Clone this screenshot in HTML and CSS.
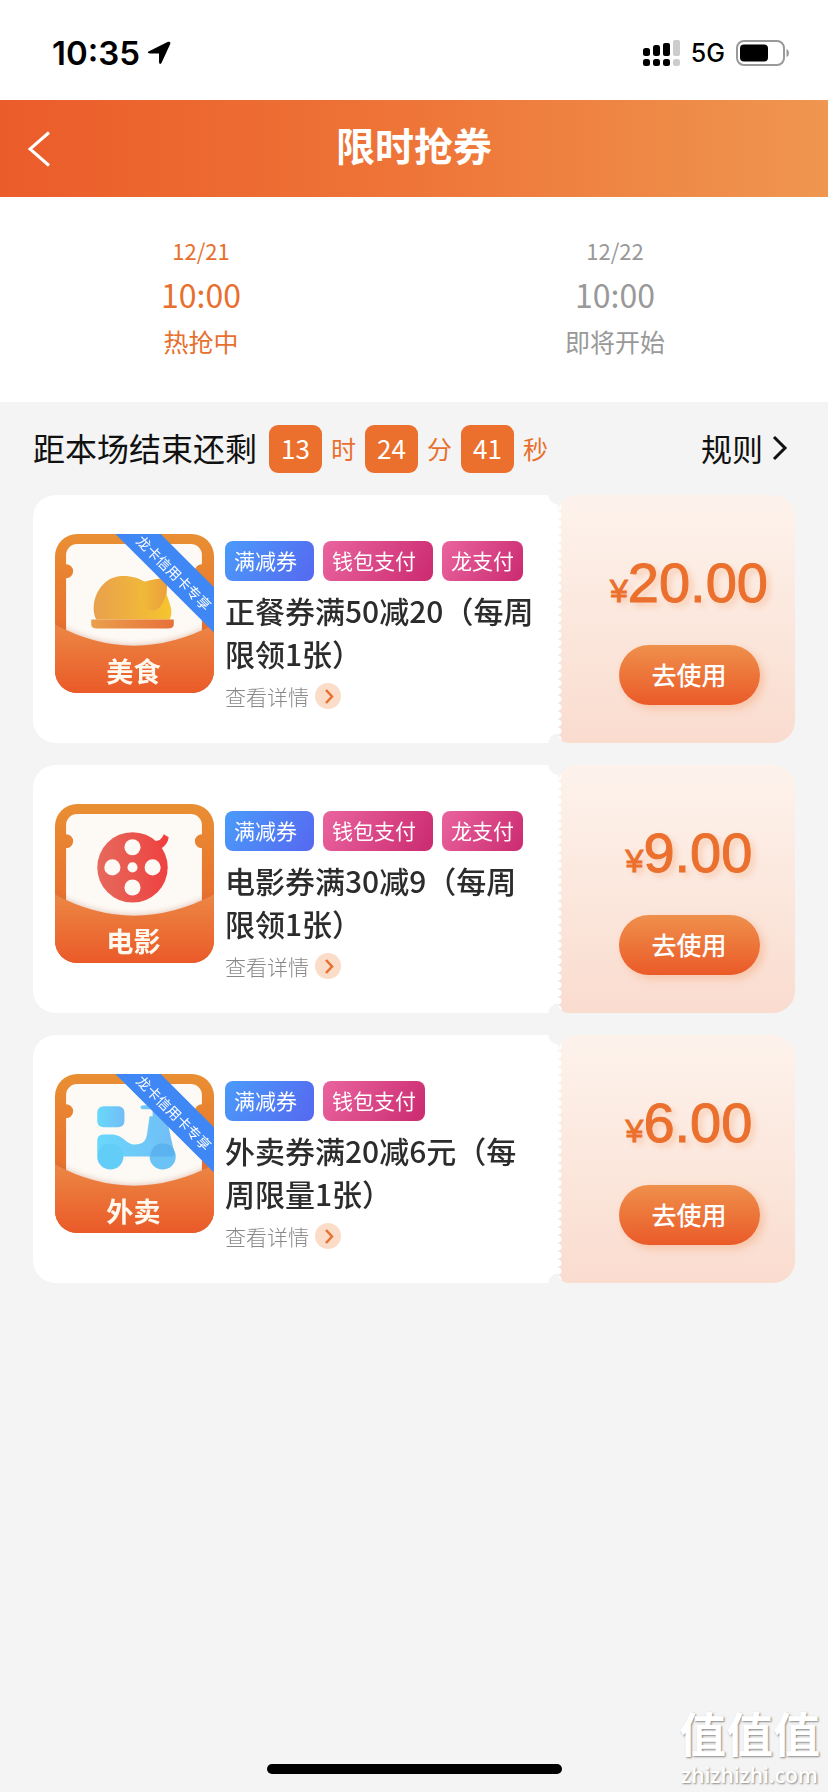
FILE: index.html
```html
<!DOCTYPE html>
<html lang="zh-CN">
<head>
<meta charset="utf-8">
<meta name="viewport" content="width=device-width, initial-scale=1">
<title>限时抢券</title>
<link rel="stylesheet" href="styles.css">
</head>
<body>
<svg class="defs" width="0" height="0" aria-hidden="true">
  <defs>
    <linearGradient id="frame" x1="0" y1="0" x2="0" y2="1"><stop offset="0" stop-color="#e98f33"/><stop offset=".6" stop-color="#e8702e"/><stop offset="1" stop-color="#e85a26"/></linearGradient>
    <linearGradient id="pocket" x1="0" y1="0" x2="0" y2="1"><stop offset="0" stop-color="#ec8745"/><stop offset="1" stop-color="#ea5a28"/></linearGradient>
    <linearGradient id="food" x1="0" y1="0" x2="1" y2="0"><stop offset="0" stop-color="#e9a04c"/><stop offset="1" stop-color="#f5c52f"/></linearGradient>
    <linearGradient id="plate" x1="0" y1="0" x2="1" y2="0"><stop offset="0" stop-color="#e9a04c"/><stop offset="1" stop-color="#e8703a"/></linearGradient>
    <linearGradient id="wing" x1="0" y1="0" x2="1" y2="0"><stop offset="0" stop-color="#f1bc38"/><stop offset="1" stop-color="#eb9f3c"/></linearGradient>
    <linearGradient id="reel" x1="0" y1="0" x2="1" y2="0"><stop offset="0" stop-color="#e66a5c"/><stop offset="1" stop-color="#ee4140"/></linearGradient>
    <linearGradient id="bike" x1="0" y1="0" x2="1" y2="0"><stop offset="0" stop-color="#69d8fb"/><stop offset="1" stop-color="#72bdf6"/></linearGradient>
    <filter id="soft" x="-20%" y="-40%" width="140%" height="180%"><feGaussianBlur stdDeviation="3"/></filter>
    <clipPath id="tile"><rect width="158" height="158" rx="22"/></clipPath>
    <g id="base">
      <rect width="158" height="158" fill="url(#frame)"/>
      <path d="M22 10H135a11 11 0 0 1 11 11V30a7 7 0 0 0 0 14V120H11V44a7 7 0 0 0 0-14V21a11 11 0 0 1 11-11Z" fill="#fdf9f4"/>
    </g>
    <g id="front">
      <path d="M0 90Q78 132 158 90V158H0Z" fill="#b9684b" opacity=".45" filter="url(#soft)"/>
      <path d="M0 90Q78 132 158 90V158H0Z" fill="url(#pocket)"/>
    </g>
    <g id="ribbon">
      <path d="M60 0H105L158 53V98Z" fill="#3f87f5"/>
      <text class="ribbon-text" transform="translate(118 39) rotate(45)" text-anchor="middle" y="5">龙卡信用卡专享</text>
    </g>
  </defs>
</svg>

<div class="status">
  <div class="status-side">
    <span class="clock">10:35</span>
    <svg width="24" height="24" viewBox="0 0 24 24" aria-hidden="true"><path d="M1.500 10.500 21 .800Q24 .200 23.200 3L14.500 22Q12.500 24.500 12 21V12.500H3Q-.500 12 1.500 10.500Z"/></svg>
  </div>
  <div class="status-side right">
    <svg width="38" height="28" viewBox="0 0 38 28" aria-hidden="true">
      <rect x="1" y="9" width="7" height="8" rx="2.500"/><rect x="11" y="6" width="7" height="11" rx="2.500"/><rect x="21" y="4" width="7" height="13" rx="2"/><rect x="31" y="1" width="7" height="16" rx="2" fill="#ccc"/>
      <rect x="1" y="20" width="7" height="7" rx="2.500"/><rect x="11" y="20" width="7" height="7" rx="2.500"/><rect x="21" y="20" width="7" height="7" rx="2.500"/><rect x="31" y="20" width="7" height="7" rx="2.500" fill="#ccc"/>
    </svg>
    <span class="network">5G</span>
    <svg width="54" height="26" viewBox="0 0 54 26" aria-hidden="true"><rect x="1" y="1" width="47" height="24" rx="7" fill="none" stroke="#999" stroke-width="2"/><rect x="4" y="4.500" width="28" height="17" rx="4"/><path d="M50.500 9Q53 10 53 13T50.500 17Z" fill="#999"/></svg>
  </div>
</div>

<header class="header">
  <button class="back" aria-label="返回"><svg width="22" height="36" viewBox="0 0 22 36"><path d="M21 1.500 2 18 21 34.500"/></svg></button>
  <h1>限时抢券</h1>
</header>

<nav class="sessions">
  <button class="session active"><span class="date">12/21</span><span class="hour">10:00</span><span class="state">热抢中</span></button>
  <button class="session"><span class="date">12/22</span><span class="hour">10:00</span><span class="state">即将开始</span></button>
</nav>

<main>
  <div class="countdown">
    <span class="label">距本场结束还剩</span>
    <b>13</b><i>时</i><b>24</b><i>分</i><b>41</b><i>秒</i>
    <a class="rules" href="#">规则<svg width="16" height="26" viewBox="0 0 16 26" aria-hidden="true"><path d="M2 2 13 13 2 24"/></svg></a>
  </div>

  <article class="coupon">
    <div class="body">
      <svg class="thumb" viewBox="0 0 158 158" role="img" aria-label="美食">
        <g clip-path="url(#tile)">
          <use href="#base"/>
          <path d="M41 85C36 75 38 59 50 48 62 38 80 42 88 47 94 51 98 43 111 44V60C114 70 118 76 114 85Z" fill="url(#food)"/>
          <path d="M87 48Q100 44 111 44C113 57 107 76 98 76 84 76 80 62 87 48Z" fill="url(#wing)"/>
          <path d="M36 85H118V90Q118 94 112 94H42Q36 94 36 90Z" fill="url(#plate)"/>
          <use href="#front"/>
          <use href="#ribbon"/>
        </g>
        <text class="thumb-text" x="78" y="147" text-anchor="middle">美食</text>
      </svg>
      <div class="info">
        <div class="tags"><span class="tag blue">满减券</span><span class="tag">钱包支付</span><span class="tag">龙支付</span></div>
        <h2>正餐券满50减20（每周限领1张）</h2>
        <a class="detail" href="#">查看详情<svg width="26" height="26" viewBox="0 0 26 26" aria-hidden="true"><circle cx="13" cy="13" r="13"/><path d="M11 7 17 13.500 11 20"/></svg></a>
      </div>
    </div>
    <div class="stub"><p class="price"><small>¥</small>20.00</p><button class="use">去使用</button></div>
  </article>

  <article class="coupon">
    <div class="body">
      <svg class="thumb" viewBox="0 0 158 158" role="img" aria-label="电影">
        <g clip-path="url(#tile)">
          <use href="#base"/>
          <path d="M98 37Q106 37 108 30L113 33Q112 41 104 45Z" fill="#ee4140"/>
          <circle cx="77" cy="63" r="35" fill="url(#reel)"/>
          <g fill="#fdf9f4"><circle cx="77" cy="43" r="8"/><circle cx="57" cy="63" r="8"/><circle cx="97" cy="63" r="8"/><circle cx="77" cy="83" r="8"/><circle cx="77" cy="63" r="5"/></g>
          <use href="#front"/>
        </g>
        <text class="thumb-text" x="78" y="147" text-anchor="middle">电影</text>
      </svg>
      <div class="info">
        <div class="tags"><span class="tag blue">满减券</span><span class="tag">钱包支付</span><span class="tag">龙支付</span></div>
        <h2>电影券满30减9（每周限领1张）</h2>
        <a class="detail" href="#">查看详情<svg width="26" height="26" viewBox="0 0 26 26" aria-hidden="true"><circle cx="13" cy="13" r="13"/><path d="M11 7 17 13.500 11 20"/></svg></a>
      </div>
    </div>
    <div class="stub"><p class="price"><small>¥</small>9.00</p><button class="use">去使用</button></div>
  </article>

  <article class="coupon">
    <div class="body">
      <svg class="thumb" viewBox="0 0 158 158" role="img" aria-label="外卖">
        <g clip-path="url(#tile)">
          <use href="#base"/>
          <rect x="42" y="32" width="27" height="21" rx="6" fill="url(#bike)"/>
          <path d="M42 66Q42 60 48 60H56C68 60 70 70 80 70 90 70 91 64 92 56L94 42H97V35H88Q85 35 85 33T88 31H101L111 44 118 76Q119 82 112 82H63Q42 88 42 78Z" fill="url(#bike)"/>
          <circle cx="55" cy="82" r="13" fill="#62cdf7"/><circle cx="107" cy="82" r="13" fill="#6bc3f5"/>
          <path d="M95 82Q96 69 107 69T119 79Q119 82 115 82Z" fill="#5ab2ee"/>
          <use href="#front"/>
          <use href="#ribbon"/>
        </g>
        <text class="thumb-text" x="78" y="147" text-anchor="middle">外卖</text>
      </svg>
      <div class="info">
        <div class="tags"><span class="tag blue">满减券</span><span class="tag">钱包支付</span></div>
        <h2>外卖券满20减6元（每周限量1张）</h2>
        <a class="detail" href="#">查看详情<svg width="26" height="26" viewBox="0 0 26 26" aria-hidden="true"><circle cx="13" cy="13" r="13"/><path d="M11 7 17 13.500 11 20"/></svg></a>
      </div>
    </div>
    <div class="stub"><p class="price"><small>¥</small>6.00</p><button class="use">去使用</button></div>
  </article>
</main>

<div class="home-bar"></div>
<div class="watermark"><strong>值值值</strong><span>zhizhizhi.com</span></div>
</body>
</html>
```

FILE: styles.css
```css
* { box-sizing: border-box; margin: 0; padding: 0; }

body {
  position: relative;
  min-height: 100vh;
  background: #f4f4f4;
  color: #111;
  font-family: "Noto Sans CJK SC", sans-serif;
}

button { border: 0; background: none; font: inherit; color: inherit; }
a { color: inherit; text-decoration: none; }
svg { display: block; flex: none; }
.defs { position: absolute; }

/* Status bar */
.status {
  display: flex;
  justify-content: space-between;
  align-items: center;
  height: 100px;
  padding: 6px 38px 0 52px;
  background: #fff;
  color: #000;
  font-family: Inter, sans-serif;
}
.status-side { display: flex; align-items: center; gap: 7px; }
.right { gap: 11px; }
.clock { font-size: 33px; font-weight: 600; }
.network { font-size: 25px; font-weight: 500; }

/* Title bar */
.header {
  display: grid;
  grid-template-columns: 80px 1fr 80px;
  align-items: center;
  height: 97px;
  background: linear-gradient(90deg, #eb5c2a, #ee7538 50%, #ef9650);
  color: #fff;
}
.back { padding-left: 28px; }
.back path { fill: none; stroke: #fff; stroke-width: 3; }
h1 { padding-bottom: 10px; font-size: 39px; line-height: 56px; font-weight: 700; text-align: center; }

/* Session switcher */
.sessions {
  display: grid;
  grid-template-columns: 1fr 1fr;
  height: 205px;
  padding-top: 38px;
  background: #fff;
}
.session {
  display: flex;
  flex-direction: column;
  align-items: center;
  padding-right: 12px;
  color: #999;
}
.session.active { color: #e8702e; }
.date { font-size: 22px; line-height: 30px; }
.hour { font-size: 32px; line-height: 58px; }
.state { font-size: 25px; line-height: 36px; }

main { padding: 0 33px 80px; }

/* Countdown */
.countdown { display: flex; align-items: center; height: 93px; padding-top: 1px; font-size: 25px; }
.label { margin-right: 12px; padding-bottom: 5px; font-size: 32px; }
.countdown b {
  width: 53px;
  padding-bottom: 2px;
  border-radius: 9px;
  background: #eb702d;
  color: #fff;
  font-size: 26px;
  font-weight: 400;
  line-height: 46px;
  text-align: center;
}
.countdown i { width: 43px; padding-bottom: 2px; color: #e8702e; font-style: normal; text-align: center; }
.rules { display: flex; align-items: center; gap: 9px; margin-left: auto; padding: 0 7px 3px 0; font-size: 31px; }
.rules path { fill: none; stroke: #111; stroke-width: 3; }

/* Coupons */
.coupon { display: flex; min-height: 248px; margin-bottom: 22px; }
.body {
  display: flex;
  flex: 1;
  gap: 11px;
  padding: 39px 17px 25px 22px;
  border-radius: 22px 0 0 22px;
  background: #fff;
  -webkit-mask: radial-gradient(circle at 100% 0, transparent 9px, #000 10px) top / 100% 51% no-repeat, radial-gradient(circle at 100% 100%, transparent 9px, #000 10px) bottom / 100% 50% no-repeat;
  mask: radial-gradient(circle at 100% 0, transparent 9px, #000 10px) top / 100% 51% no-repeat, radial-gradient(circle at 100% 100%, transparent 9px, #000 10px) bottom / 100% 50% no-repeat;
}
.thumb { width: 159px; height: 159px; }
.thumb-text { fill: #fff8ee; font-size: 27px; font-weight: 700; }
.ribbon-text { fill: #fff; font-size: 14px; }
.info { flex: 1; padding-top: 7px; }
.tags { display: flex; gap: 9px; }
.tag {
  padding: 0 17px 2px 9px;
  border-radius: 8px;
  background: linear-gradient(120deg, #e9649f, #cb2a70);
  color: #fff;
  font-size: 21px;
  line-height: 38px;
  white-space: nowrap;
}
.tag:last-child { padding-right: 9px; }
.tag.blue { background: linear-gradient(120deg, #4a9bfa, #5668f0); }
h2 { margin-top: 8px; color: #2c2c2c; font-size: 30px; font-weight: 500; line-height: 43px; }
.detail { display: flex; align-items: center; gap: 6px; margin-top: 5px; color: #888; font-size: 21px; font-weight: 300; line-height: 32px; }
.detail circle { fill: #fbdcc8; }
.detail path { fill: none; stroke: #e8702e; stroke-width: 2.500; }

.stub {
  display: flex;
  flex-direction: column;
  align-items: center;
  width: 237px;
  padding: 56px 0 0 25px;
  border-radius: 18px 22px 22px 10px;
  background:
    radial-gradient(circle at 0 4px, #fff 3px, transparent 4px) 0 0 / 4px 8px repeat-y,
    linear-gradient(#fdf3ec, #fadccf);
}
.price {
  color: #eb702d;
  font-family: "Liberation Sans", sans-serif;
  font-size: 56px;
  line-height: 64px;
  white-space: nowrap;
  -webkit-text-stroke: 1px #eb702d;
  text-shadow: 4px 4px 6px #f8c9ad;
}
.price small { font-size: 32px; }
.use {
  margin-top: 22px;
  padding-bottom: 2px;
  width: 141px;
  border-radius: 30px;
  background: linear-gradient(#ef904c, #ea5a28);
  box-shadow: 4px 4px 8px #f6c4a8;
  color: #fff;
  font-size: 25px;
  font-weight: 500;
  line-height: 58px;
}

/* Overlays */
.home-bar {
  position: absolute;
  bottom: 18px;
  left: 50%;
  width: 295px;
  height: 10px;
  margin-left: -147px;
  border-radius: 5px;
  background: #000;
}
.watermark {
  position: absolute;
  right: 8px;
  bottom: 3px;
  display: flex;
  flex-direction: column;
  align-items: center;
  color: #fff;
  text-shadow: 1px 1px 2px #888;
}
.watermark strong { font-family: "Liberation Sans", "Noto Sans CJK SC", sans-serif; font-size: 47px; font-weight: 700; line-height: 50px; }
.watermark span { font-family: "Open Sans", sans-serif; font-size: 21px; font-weight: 600; line-height: 28px; }
```
